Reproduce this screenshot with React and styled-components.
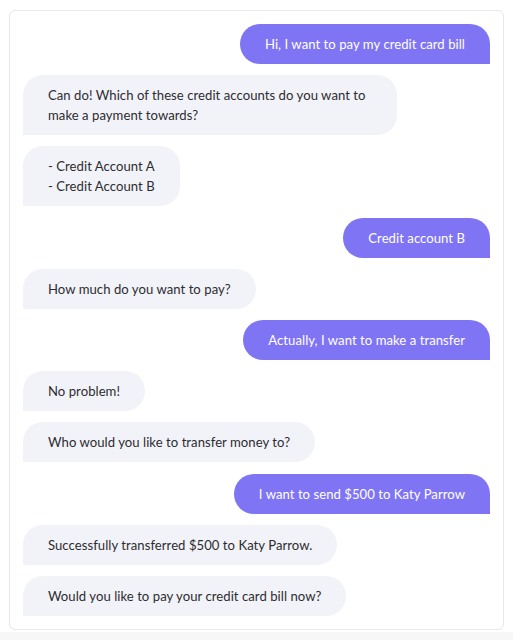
import React from 'react';
import styled, { createGlobalStyle } from 'styled-components';

const GlobalStyle = createGlobalStyle`
  html, body {
    margin: 0;
    padding: 0;
    background: #ffffff;
  }
  body {
    font-family: 'Lato', 'Noto Sans', sans-serif;
  }
`;

const Page = styled.div`
  padding: 10px 9px 0 9px;
  min-height: 640px;
  box-sizing: border-box;
  display: flex;
  flex-direction: column;
`;

const Card = styled.div`
  border: 1px solid #e6e7ea;
  border-radius: 6px;
  padding: 13px;
  display: flex;
  flex-direction: column;
  gap: 11.2px;
  background: #ffffff;
`;

const Footer = styled.div`
  flex: 1;
  margin: 2px -9px 0 -9px;
  background: #f7f7f8;
`;

const Bubble = styled.div`
  max-width: 80%;
  box-sizing: border-box;
  padding: 10px 25px;
  font-size: 13.1px;
  line-height: 20px;
  letter-spacing: 0.05px;
  border-radius: 20px;
  white-space: pre-line;
  align-self: ${p => (p.$fromUser ? 'flex-end' : 'flex-start')};
  background: ${p => (p.$fromUser ? '#7f75f4' : '#f2f3f8')};
  color: ${p => (p.$fromUser ? '#ffffff' : '#2c2c30')};
  border-bottom-right-radius: ${p => (p.$fromUser ? '0' : '20px')};
  border-bottom-left-radius: ${p => (p.$fromUser ? '20px' : '0')};
`;

const messages = [
  { user: true, text: 'Hi, I want to pay my credit card bill' },
  { user: false, text: 'Can do! Which of these credit accounts do you want to make a payment towards?' },
  { user: false, text: '- Credit Account A\n- Credit Account B' },
  { user: true, text: 'Credit account B' },
  { user: false, text: 'How much do you want to pay?' },
  { user: true, text: 'Actually, I want to make a transfer' },
  { user: false, text: 'No problem!' },
  { user: false, text: 'Who would you like to transfer money to?' },
  { user: true, text: 'I want to send $500 to Katy Parrow' },
  { user: false, text: 'Successfully transferred $500 to Katy Parrow.' },
  { user: false, text: 'Would you like to pay your credit card bill now?' },
];

const App = () => (
  <>
    <GlobalStyle />
    <Page>
      <Card>
        {messages.map((m, i) => (
          <Bubble key={i} $fromUser={m.user}>
            {m.text}
          </Bubble>
        ))}
      </Card>
      <Footer />
    </Page>
  </>
);

export default App;
